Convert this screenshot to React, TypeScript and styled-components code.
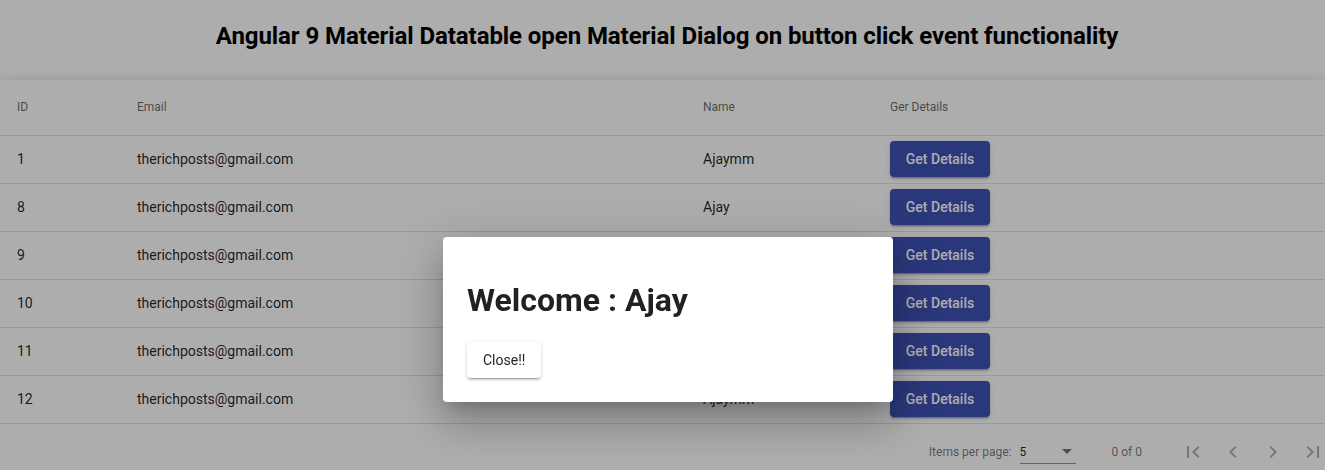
import React from 'react';
import styled, { createGlobalStyle } from 'styled-components';

type User = { id: number; email: string; name: string };

const users: User[] = [
  { id: 1, email: 'therichposts@gmail.com', name: 'Ajaymm' },
  { id: 8, email: 'therichposts@gmail.com', name: 'Ajay' },
  { id: 9, email: 'therichposts@gmail.com', name: 'Ajay' },
  { id: 10, email: 'therichposts@gmail.com', name: 'Ajay' },
  { id: 11, email: 'therichposts@gmail.com', name: 'Ajay' },
  { id: 12, email: 'therichposts@gmail.com', name: 'Ajaymm' },
];

const GlobalStyle = createGlobalStyle`
  body {
    margin: 0;
    background: #fff;
    font-family: Roboto, "Helvetica Neue", sans-serif;
    overflow: hidden;
  }
`;

const PageIcon = ({ d }: { d: string }) => (
  <svg width="24" height="24" viewBox="0 0 24 24" fill="currentColor">
    <path d={d} />
  </svg>
);

const App = () => {
  return (
    <>
      <GlobalStyle />
      <Page>
        <Title>Angular 9 Material Datatable open Material Dialog on button click event functionality</Title>
        <TableCard>
          <HeaderRow>
            <HeaderCell>ID</HeaderCell>
            <HeaderCell>Email</HeaderCell>
            <HeaderCell>Name</HeaderCell>
            <HeaderCell>Ger Details</HeaderCell>
          </HeaderRow>
          {users.map((u) => (
            <Row key={u.id}>
              <Cell>{u.id}</Cell>
              <Cell>{u.email}</Cell>
              <Cell>{u.name}</Cell>
              <Cell>
                <PrimaryButton>Get Details</PrimaryButton>
              </Cell>
            </Row>
          ))}
          <Paginator>
            <PageLabel>Items per page:</PageLabel>
            <PageSelect>
              <span>5</span>
              <SelectArrow />
            </PageSelect>
            <RangeLabel>0 of 0</RangeLabel>
            <Actions>
              <IconButton disabled>
                <PageIcon d="M18.41 16.59L13.82 12l4.59-4.59L17 6l-6 6 6 6zM6 6h2v12H6z" />
              </IconButton>
              <IconButton disabled>
                <PageIcon d="M15.41 7.41L14 6l-6 6 6 6 1.41-1.41L10.83 12z" />
              </IconButton>
              <IconButton disabled>
                <PageIcon d="M10 6L8.59 7.41 13.17 12l-4.58 4.59L10 18l6-6z" />
              </IconButton>
              <IconButton disabled>
                <PageIcon d="M5.59 7.41L10.18 12l-4.59 4.59L7 18l6-6-6-6zM16 6h2v12h-2z" />
              </IconButton>
            </Actions>
          </Paginator>
        </TableCard>
      </Page>
      <Backdrop />
      <Dialog>
        <DialogTitle>Welcome : Ajay</DialogTitle>
        <CloseButton>Close!!</CloseButton>
      </Dialog>
    </>
  );
};

export default App;

const Page = styled.div`
  width: 100%;
`;

const Title = styled.h2`
  margin: 0;
  height: 80px;
  box-sizing: border-box;
  padding: 22px 0 0 9px;
  line-height: 28px;
  text-align: center;
  font-size: 24px;
  font-weight: 700;
  letter-spacing: -0.08px;
  color: #000;
`;

const TableCard = styled.div`
  background: #fff;
  box-shadow: 0 5px 5px -3px rgba(0, 0, 0, 0.2), 0 8px 10px 1px rgba(0, 0, 0, 0.14),
    0 3px 14px 2px rgba(0, 0, 0, 0.12);
`;

const rowGrid = `
  display: grid;
  grid-template-columns: 120px 566px 187px 1fr;
  align-items: center;
  padding: 0 17px;
  border-bottom: 1px solid rgba(0, 0, 0, 0.12);
`;

const HeaderRow = styled.div`
  ${rowGrid}
  height: 54px;
  padding-bottom: 1px;
`;

const Row = styled.div`
  ${rowGrid}
  height: 46px;
  padding-bottom: 1px;
`;

const HeaderCell = styled.div`
  font-size: 12px;
  font-weight: 400;
  color: rgba(0, 0, 0, 0.6);
`;

const Cell = styled.div`
  font-size: 14px;
  color: rgba(0, 0, 0, 0.87);
`;

const PrimaryButton = styled.button`
  width: 100px;
  height: 36px;
  border: none;
  border-radius: 4px;
  background: #3f51b5;
  color: #fff;
  font-family: Roboto, sans-serif;
  font-size: 14px;
  font-weight: 500;
  box-shadow: 0 3px 1px -2px rgba(0, 0, 0, 0.2), 0 2px 2px 0 rgba(0, 0, 0, 0.14),
    0 1px 5px 0 rgba(0, 0, 0, 0.12);
  cursor: pointer;
`;

const Paginator = styled.div`
  display: flex;
  align-items: center;
  justify-content: flex-end;
  height: 56px;
  font-size: 12px;
  color: rgba(0, 0, 0, 0.54);
`;

const PageLabel = styled.span`
  margin-right: 8px;
`;

const PageSelect = styled.div`
  display: flex;
  align-items: center;
  justify-content: space-between;
  width: 56px;
  height: 22px;
  margin-top: 2px;
  border-bottom: 1px solid rgba(0, 0, 0, 0.42);
  color: rgba(0, 0, 0, 0.87);
  font-size: 12px;
  box-sizing: border-box;
  padding: 0 4px 2px 0;
`;

const SelectArrow = styled.span`
  width: 0;
  height: 0;
  border-left: 5px solid transparent;
  border-right: 5px solid transparent;
  border-top: 5px solid rgba(0, 0, 0, 0.54);
`;

const RangeLabel = styled.span`
  margin: 0 31px 0 36px;
`;

const Actions = styled.div`
  display: flex;
  margin-right: -8px;
`;

const IconButton = styled.button`
  width: 40px;
  height: 40px;
  border: none;
  background: transparent;
  padding: 0;
  display: flex;
  align-items: center;
  justify-content: center;
  color: rgba(0, 0, 0, 0.3);
`;

const Backdrop = styled.div`
  position: fixed;
  inset: 0;
  background: rgba(0, 0, 0, 0.32);
`;

const Dialog = styled.div`
  position: fixed;
  left: 443px;
  top: 237px;
  width: 450px;
  box-sizing: border-box;
  padding: 24px;
  background: #fff;
  border-radius: 4px;
  box-shadow: 0 11px 15px -7px rgba(0, 0, 0, 0.2), 0 24px 38px 3px rgba(0, 0, 0, 0.14),
    0 9px 46px 8px rgba(0, 0, 0, 0.12);
`;

const DialogTitle = styled.h1`
  margin: 20px 0 23px;
  font-size: 32px;
  line-height: 38px;
  font-weight: 700;
  color: rgba(0, 0, 0, 0.87);
`;

const CloseButton = styled.button`
  display: block;
  height: 36px;
  padding: 0 16px;
  border: none;
  border-radius: 4px;
  background: #fff;
  color: rgba(0, 0, 0, 0.87);
  font-family: Roboto, sans-serif;
  font-size: 14px;
  box-shadow: 0 3px 1px -2px rgba(0, 0, 0, 0.2), 0 2px 2px 0 rgba(0, 0, 0, 0.14),
    0 1px 5px 0 rgba(0, 0, 0, 0.12);
`;
